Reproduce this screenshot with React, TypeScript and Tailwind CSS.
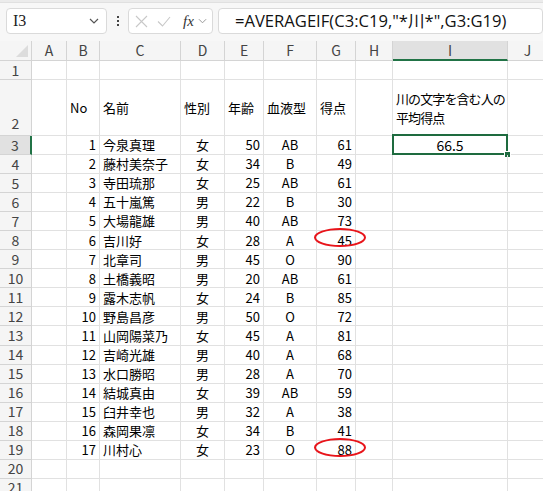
import React from 'react';

const colW = ['w-[32px]', 'w-[35px]', 'w-[33px]', 'w-[81px]', 'w-[44px]', 'w-[39px]', 'w-[53px]', 'w-[39px]', 'w-[37px]', 'w-[115px]', 'w-[40px]'];
const letters = ['A', 'B', 'C', 'D', 'E', 'F', 'G', 'H', 'I', 'J'];

const data: [number, string, string, number, string, number][] = [
  [1, '今泉真理', '女', 50, 'AB', 61],
  [2, '藤村美奈子', '女', 34, 'B', 49],
  [3, '寺田琉那', '女', 25, 'AB', 61],
  [4, '五十嵐篤', '男', 22, 'B', 30],
  [5, '大場龍雄', '男', 40, 'AB', 73],
  [6, '吉川好', '女', 28, 'A', 45],
  [7, '北章司', '男', 45, 'O', 90],
  [8, '土橋義昭', '男', 20, 'AB', 61],
  [9, '露木志帆', '女', 24, 'B', 85],
  [10, '野島昌彦', '男', 50, 'O', 72],
  [11, '山岡陽菜乃', '女', 45, 'A', 81],
  [12, '吉崎光雄', '男', 40, 'A', 68],
  [13, '水口勝昭', '男', 28, 'A', 70],
  [14, '結城真由', '女', 39, 'AB', 59],
  [15, '臼井幸也', '男', 32, 'A', 38],
  [16, '森岡果凛', '女', 34, 'B', 41],
  [17, '川村心', '女', 23, 'O', 88],
];

const Chevron = () => (
  <svg width="10" height="6" viewBox="0 0 10 6" fill="none" stroke="#555" strokeWidth="1.2">
    <path d="M1 1l4 4 4-4" />
  </svg>
);

const RowHead = ({ n, active, tall }: { n: number; active?: boolean; tall?: boolean }) => (
  <div
    className={`${colW[0]} shrink-0 flex justify-center border-r border-b border-[#d4d4d4] text-[14px] text-[#444] ${tall ? 'items-end pb-[1px]' : 'items-center'} ${active ? 'bg-[#e1e1e1] border-r-2 border-r-[#217346]' : 'bg-[#f5f5f5]'}`}
  >
    {n}
  </div>
);

const Cell = ({ i, children, align = 'left', className = '' }: { i: number; children?: React.ReactNode; align?: 'left' | 'right' | 'center'; className?: string }) => (
  <div
    className={`${colW[i]} shrink-0 flex items-center border-r border-b border-[#e1e1e1] px-[3px] whitespace-nowrap overflow-visible ${align === 'right' ? 'justify-end' : align === 'center' ? 'justify-center' : 'justify-start'} ${className}`}
  >
    {children}
  </div>
);

export default function App() {
  return (
    <div className="w-[543px] h-[491px] overflow-hidden bg-white text-black relative" style={{ fontFamily: '"Noto Sans CJK JP", "Noto Sans", sans-serif' }}>
      {/* toolbar */}
      <div className="h-[41px] bg-[#f7f7f7] relative">
        <div className="h-[3px] bg-[#ebebeb] border-b border-[#e0e0e0]" />
        <div className="flex items-center h-[26px] mt-[5px]">
          <div className="ml-[6px] w-[101px] h-[26px] bg-white border border-[#dadada] rounded-[4px] flex items-center justify-between pl-[6px] pr-[7px]">
            <span className="text-[16px] text-[#222]" style={{ fontFamily: '"Liberation Serif", serif' }}>I3</span>
            <Chevron />
          </div>
          <div className="w-[21px] flex flex-col items-center gap-[2px]">
            <span className="w-[2px] h-[2px] bg-[#444]" />
            <span className="w-[2px] h-[2px] bg-[#444]" />
            <span className="w-[2px] h-[2px] bg-[#444]" />
          </div>
          <div className="w-[85px] h-[26px] bg-white border border-[#dadada] rounded-[4px] flex items-center pl-[6px] pr-[4px] gap-[9px]">
            <svg width="13" height="13" viewBox="0 0 13 13" stroke="#c8c8c8" strokeWidth="1.1" fill="none">
              <path d="M1 1l11 11M12 1L1 12" />
            </svg>
            <svg width="14" height="11" viewBox="0 0 14 11" stroke="#c8c8c8" strokeWidth="1.1" fill="none">
              <path d="M1 5.5l4.5 4.5L13 1" />
            </svg>
            <span className="italic text-[15px] text-[#333] ml-[3px] leading-none" style={{ fontFamily: '"Liberation Serif", serif' }}>fx</span>
            <svg width="9" height="6" viewBox="0 0 10 6" fill="none" stroke="#999" strokeWidth="1.1" className="-ml-[5px]">
              <path d="M1 1l4 4 4-4" />
            </svg>
          </div>
          <div className="ml-[5px] flex-1 h-[26px] bg-white border border-[#dadada] rounded-[4px] flex items-center pl-[16px]">
            <span className="text-[16.6px] text-[#111] whitespace-nowrap" style={{ fontFamily: '"Open Sans", "Noto Sans CJK JP", sans-serif' }}>=AVERAGEIF(C3:C19,"*川*",G3:G19)</span>
          </div>
        </div>
      </div>

      {/* column headers */}
      <div className="flex h-[20px]">
        <div className={`${colW[0]} shrink-0 bg-[#f5f5f5] border-r border-b border-[#d4d4d4] relative`}>
          <div className="absolute right-[3px] bottom-[3px] w-0 h-0 border-l-[12px] border-l-transparent border-b-[12px] border-b-[#dcdcdc]" />
        </div>
        {letters.map((l, i) => (
          <div
            key={l}
            className={`${colW[i + 1]} shrink-0 flex items-center justify-center text-[14px] text-[#444] border-r border-[#d4d4d4] ${l === 'I' ? 'bg-[#e1e1e1] border-b-2 border-b-[#217346]' : 'bg-[#f5f5f5] border-b border-b-[#d4d4d4]'}`}
          >
            {l}
          </div>
        ))}
      </div>

      {/* row 1 */}
      <div className="flex h-[19px]">
        <RowHead n={1} />
        {letters.map((l, i) => (
          <Cell key={l} i={i + 1} />
        ))}
      </div>

      {/* row 2 */}
      <div className="flex h-[56px] text-[13px]">
        <RowHead n={2} tall />
        <Cell i={1} />
        <Cell i={2}>No</Cell>
        <Cell i={3}>名前</Cell>
        <Cell i={4}>性別</Cell>
        <Cell i={5}>年齢</Cell>
        <Cell i={6}>血液型</Cell>
        <Cell i={7}>得点</Cell>
        <Cell i={8} />
        <Cell i={9}>
          <div className="leading-[19px] whitespace-nowrap tracking-[-0.9px]">
            川の文字を含む人の
            <br />
            平均得点
          </div>
        </Cell>
        <Cell i={10} />
      </div>

      {/* data rows */}
      {data.map((r, idx) => {
        const rowNo = idx + 3;
        return (
          <div key={rowNo} className="flex h-[19.06px] text-[13px]">
            <RowHead n={rowNo} active={rowNo === 3} />
            <Cell i={1} />
            <Cell i={2} align="right">{r[0]}</Cell>
            <Cell i={3}>{r[1]}</Cell>
            <Cell i={4} align="center">{r[2]}</Cell>
            <Cell i={5} align="right">{r[3]}</Cell>
            <Cell i={6} align="center">{r[4]}</Cell>
            <Cell i={7} align="right" className="relative">
              {r[5]}
              {(r[5] === 45 || r[5] === 88) && (
                <div className="absolute left-[-3px] top-[-3px] w-[52px] h-[19px] border-2 border-[#e8141a] rounded-[50%]" />
              )}
            </Cell>
            <Cell i={8} />
            <Cell i={9} align="center" className="relative z-10">
              {rowNo === 3 && (
                <>
                  <span className="text-[14px]">66.5</span>
                  <div className="absolute -left-[1px] -top-[2px] -right-[1px] -bottom-[1px] border-[2px] border-[#1e6b3f]" />
                  <div className="absolute -right-[4px] -bottom-[4px] w-[7px] h-[7px] bg-[#1e6b3f] border border-white" />
                </>
              )}
            </Cell>
            <Cell i={10} />
          </div>
        );
      })}

      {/* rows 20-21 */}
      {[20, 21].map((n) => (
        <div key={n} className="flex h-[19.06px]">
          <RowHead n={n} />
          {letters.map((l, i) => (
            <Cell key={l} i={i + 1} />
          ))}
        </div>
      ))}
    </div>
  );
}
